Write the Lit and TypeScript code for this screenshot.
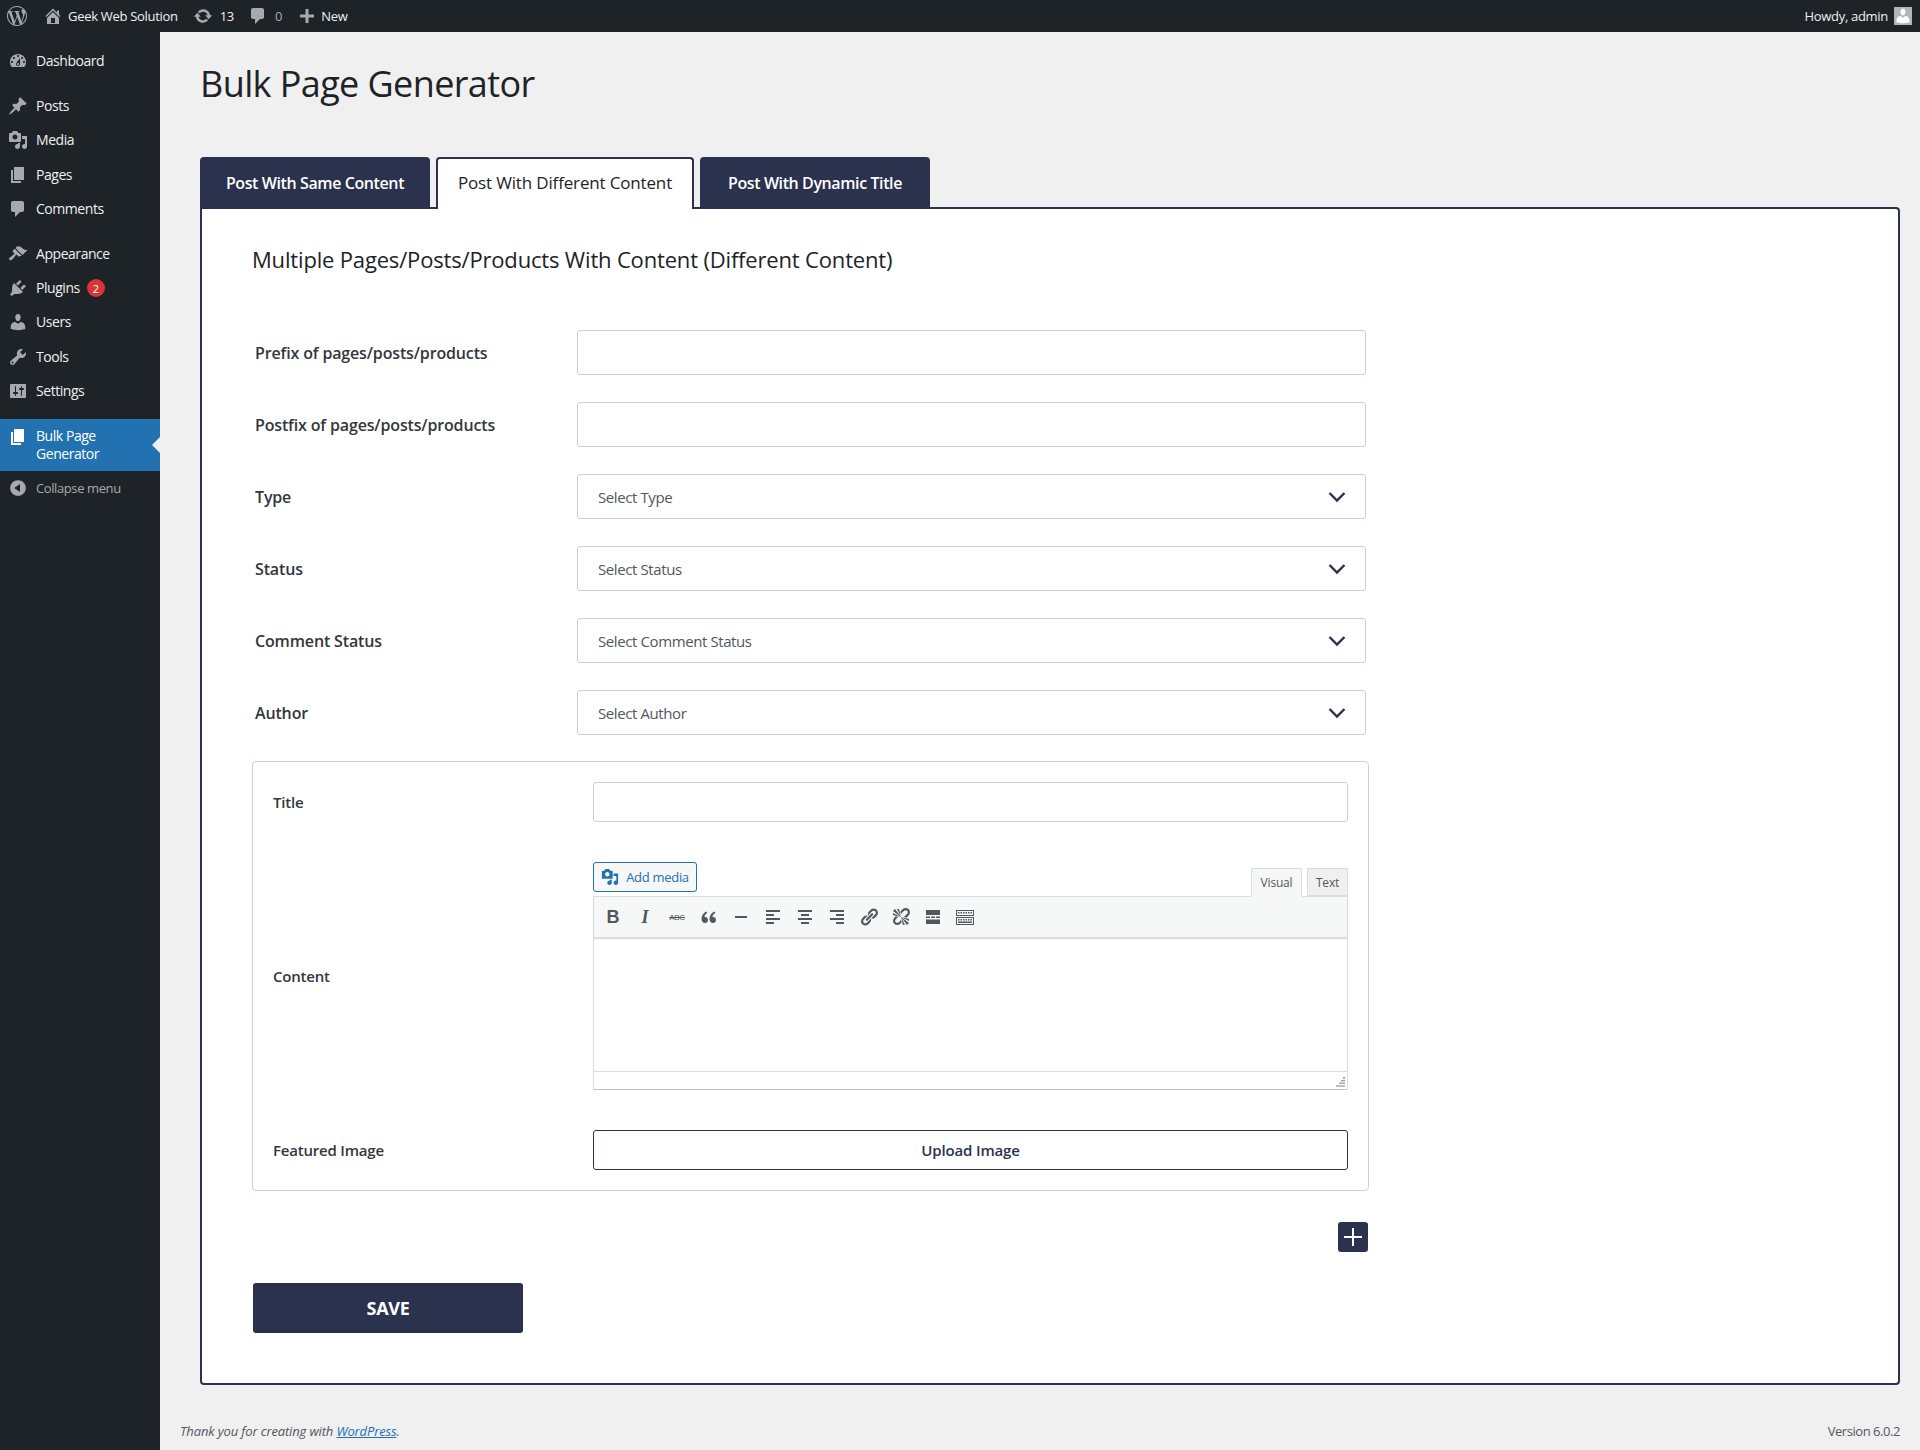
import { LitElement, html, css, svg } from 'lit';
import { customElement } from 'lit/decorators.js';

const ICONS: Record<string, string> = {
  dashboard: 'M3.76 16h12.48c1.1-1.37 1.76-3.11 1.76-5 0-4.42-3.58-8-8-8s-8 3.58-8 8c0 1.89.66 3.63 1.76 5zM10 4c.55 0 1 .45 1 1s-.45 1-1 1-1-.45-1-1 .45-1 1-1zM6 6c.55 0 1 .45 1 1s-.45 1-1 1-1-.45-1-1 .45-1 1-1zm8 0c.55 0 1 .45 1 1s-.45 1-1 1-1-.45-1-1 .45-1 1-1zm-5.37 5.55L12 7v6c0 1.1-.9 2-2 2s-2-.9-2-2c0-.57.24-1.08.63-1.45zM4 10c.55 0 1 .45 1 1s-.45 1-1 1-1-.45-1-1 .45-1 1-1zm12 0c.55 0 1 .45 1 1s-.45 1-1 1-1-.45-1-1 .45-1 1-1zm-5 3c0-.55-.45-1-1-1s-1 .45-1 1 .45 1 1 1 1-.45 1-1z',
  post: 'M10.44 3.02l1.82-1.82 6.36 6.35-1.83 1.82c-1.05-.68-2.48-.57-3.41.36l-.75.75c-.92.93-1.04 2.35-.35 3.41l-1.83 1.82-2.41-2.41-2.8 2.79c-.42.42-3.38 2.71-3.8 2.29s1.86-3.39 2.28-3.81l2.79-2.79L4.1 9.36l1.83-1.82c1.05.69 2.48.57 3.4-.36l.75-.75c.93-.92 1.05-2.35.36-3.41z',
  media: 'M13 11V4c0-.55-.45-1-1-1h-1.67L9 1H5L3.67 3H2c-.55 0-1 .45-1 1v7c0 .55.45 1 1 1h10c.55 0 1-.45 1-1zM7 4.5c1.38 0 2.5 1.12 2.5 2.5S8.38 9.5 7 9.5 4.5 8.38 4.5 7 5.62 4.5 7 4.5zM14 6h5v10.5c0 1.38-1.12 2.5-2.5 2.5S14 17.88 14 16.5s1.12-2.5 2.5-2.5c.17 0 .34.02.5.05V9h-3V6zm-4 8.05V13h2v3.5c0 1.38-1.12 2.5-2.5 2.5S7 17.88 7 16.5 8.12 14 9.5 14c.17 0 .34.02.5.05z',
  page: 'M6 15V2h10v13H6zm-1 1h8v2H3V5h2v11z',
  comments: 'M5 2h9c1.1 0 2 .9 2 2v7c0 1.1-.9 2-2 2h-2l-5 5v-5H5c-1.1 0-2-.9-2-2V4c0-1.1.9-2 2-2z',
  appearance: 'M14.48 11.06L7.41 3.99l1.5-1.5c.5-.56 2.3-.47 3.51.32 1.21.8 1.43 1.28 2.91 2.1 1.18.64 2.45 1.26 4.45.85zm-.71.71L6.7 4.7 4.93 6.47c-.39.39-.39 1.02 0 1.41l1.06 1.06c.39.39.39 1.03 0 1.42-.6.6-1.43 1.11-2.21 1.69-.35.26-.7.53-1.01.84C1.43 13.23.4 14.75 1.4 15.75c.99 1 2.5-.03 3.83-1.37.31-.31.58-.65.84-1 .58-.79 1.1-1.62 1.7-2.22.39-.39 1.02-.39 1.41 0l1.06 1.06c.39.4 1.02.4 1.41 0z',
  plugins: 'M13.11 4.36L9.87 7.6 8 5.73l3.24-3.24c.35-.34 1.05-.2 1.56.32.52.51.66 1.21.31 1.55zm-8 1.77l.91-1.12 9.01 9.01-1.19.84c-.71.71-2.63 1.16-3.82 1.16H6.14L4.9 17.26c-.59.59-1.54.59-2.12 0-.59-.58-.59-1.53 0-2.12l1.24-1.24v-3.88c0-1.13.4-3.19 1.09-3.89zm7.26 3.97l3.24-3.24c.34-.35 1.04-.21 1.55.31.52.51.66 1.21.31 1.55l-3.24 3.25z',
  users: 'M10 9.25c-2.27 0-2.73-3.44-2.73-3.44C7 4.02 7.82 2 9.97 2c2.16 0 2.98 2.02 2.71 3.81 0 0-.41 3.44-2.68 3.44zm0 2.57L12.72 10c2.39 0 4.52 2.33 4.52 4.53v2.49s-3.65 1.13-7.24 1.13c-3.65 0-7.24-1.13-7.24-1.13v-2.49c0-2.25 1.94-4.48 4.47-4.48z',
  tools: 'M16.68 9.77c-1.34 1.34-3.3 1.67-4.95.99l-5.41 6.52c-.99.99-2.59.99-3.58 0s-.99-2.59 0-3.57l6.52-5.42c-.68-1.65-.35-3.61.99-4.95 1.28-1.28 3.12-1.62 4.72-1.06l-2.89 2.89 2.82 2.82 2.86-2.87c.53 1.58.18 3.39-1.08 4.65zM3.81 16.21c.4.39 1.04.39 1.43 0 .4-.4.4-1.04 0-1.43-.39-.4-1.03-.4-1.43 0-.39.39-.39 1.03 0 1.43z',
  settings: 'M18 16V4c0-.55-.45-1-1-1H3c-.55 0-1 .45-1 1v12c0 .55.45 1 1 1h14c.55 0 1-.45 1-1zM8 11h1c.55 0 1 .45 1 1s-.45 1-1 1H8v1.5c0 .28-.22.5-.5.5s-.5-.22-.5-.5V13H6c-.55 0-1-.45-1-1s.45-1 1-1h1V5.5c0-.28.22-.5.5-.5s.5.22.5.5V11zm5-2h-1c-.55 0-1-.45-1-1s.45-1 1-1h1V5.5c0-.28.22-.5.5-.5s.5.22.5.5V7h1c.55 0 1 .45 1 1s-.45 1-1 1h-1v5.5c0 .28-.22.5-.5.5s-.5-.22-.5-.5V9z',
  collapse: 'M10 2.16c4.33 0 7.84 3.51 7.84 7.84s-3.51 7.84-7.84 7.84S2.16 14.33 2.16 10 5.71 2.16 10 2.16zm2 11.72V6.12L6.18 9.97z',
  home: 'M16 8.5l1.53 1.53-1.06 1.06L10 4.62l-6.47 6.47-1.06-1.06L10 2.5l4 4v-2h2v4zm-6-2.46l6 5.99V18H4v-5.97zM12 17v-5H8v5h4z',
  update: 'M10.2 3.28c3.53 0 6.43 2.61 6.92 6h2.08l-3.5 4-3.5-4h2.32c-.45-1.97-2.21-3.45-4.32-3.45-1.45 0-2.73.71-3.54 1.78L4.95 5.66C6.23 4.2 8.11 3.28 10.2 3.28zm-.4 13.44c-3.52 0-6.43-2.61-6.92-6H.8l3.5-4c1.17 1.33 2.33 2.67 3.5 4H5.48c.45 1.97 2.21 3.45 4.32 3.45 1.45 0 2.73-.71 3.54-1.78l1.71 1.95c-1.28 1.46-3.15 2.38-5.25 2.38z',
  plus: 'M17 8.5v3h-5.5V17h-3v-5.5H3v-3h5.5V3h3v5.5z',
  quote: 'M9 13c0 1.700-1.300 3-3 3-2.200 0-3.500-1.700-3.500-4.200C2.500 8.800 4.300 6 7.500 4.500l.800 1.500C6.500 7 5.600 8.300 5.500 10.100c.200-.100.500-.100.700-.100C7.800 10 9 11.300 9 13zM17 13c0 1.700-1.300 3-3 3-2.200 0-3.500-1.700-3.500-4.200 0-3 1.800-5.800 5-7.300l.800 1.500c-1.800 1-2.700 2.300-2.800 4.100.200-.100.500-.100.700-.100 1.600 0 2.800 1.300 2.800 3z',
  hr: 'M4 9h12v2H4z',
  alignleft: 'M3 3h14v2H3zm0 4h8v2H3zm0 4h14v2H3zm0 4h8v2H3z',
  aligncenter: 'M3 3h14v2H3zm3 4h8v2H6zm-3 4h14v2H3zm3 4h8v2H6z',
  alignright: 'M3 3h14v2H3zm6 4h8v2H9zm-6 4h14v2H3zm6 4h8v2H9z',
  link: 'M17.74 2.76c1.68 1.69 1.68 4.41 0 6.1l-1.53 1.52c-1.12 1.12-2.7 1.47-4.14 1.09l2.62-2.61.76-.77.76-.76c.84-.84.84-2.2 0-3.04-.84-.85-2.2-.85-3.04 0l-.77.76-3.38 3.38c-.37-1.44-.02-3.02 1.1-4.14l1.52-1.53c1.69-1.68 4.42-1.68 6.1 0zM8.59 13.43l5.34-5.34c.42-.42.42-1.1 0-1.52-.44-.43-1.13-.39-1.53 0l-5.33 5.34c-.42.42-.42 1.1 0 1.52.44.43 1.13.39 1.52 0zm-.76 2.29l4.14-4.15c.38 1.44.03 3.02-1.09 4.14l-1.52 1.53c-1.69 1.68-4.41 1.68-6.1 0-1.68-1.68-1.68-4.42 0-6.1l1.53-1.52c1.12-1.12 2.7-1.47 4.14-1.1l-4.14 4.15c-.85.84-.85 2.2 0 3.05.84.84 2.2.84 3.04 0z',
  unlink: 'M17.74 2.26c1.68 1.69 1.68 4.41 0 6.1l-1.53 1.52c-.32.33-.69.58-1.08.77L13 10l1.69-1.64.76-.77.76-.76c.84-.84.84-2.2 0-3.04-.84-.85-2.2-.85-3.04 0l-.77.76-.76.76L10 7l-.65-2.14c.19-.38.44-.75.77-1.07l1.52-1.53c1.69-1.68 4.42-1.68 6.1 0zM2 4l8 6-6-8zm4-2l4 8-2-8H6zM2 6l8 4-8-2V6zm7.360 7.690L10 13l.74 2.350-1.380 1.390c-1.690 1.680-4.410 1.680-6.100 0-1.680-1.680-1.680-4.420 0-6.100l1.390-1.380L7 10l-.690.640-1.520 1.530c-.850.840-.850 2.200 0 3.040.840.850 2.200.850 3.040 0zM18 16l-8-6 6 8zm-4 2l-4-8 2 8h2zm4-4l-8-4 8 2v2z',
  more: 'M3 3h14v5H3zm0 6.500h4v1.500H3zm5 0h4v1.500H8zm5 0h4v1.500h-4zM3 12.500h14V17H3z',
  kitchen: 'M1 3h18v6H1zm1 1v4h16V4zm1 1h1.500v1.500H3zm2.500 0H7v1.500H5.500zM8 5h1.500v1.500H8zm2.500 0H12v1.500h-1.500zM13 5h1.500v1.500H13zm2.500 0H17v1.500h-1.500zM1 10h18v8H1zm1 1v6h16v-6zm1 1h1.500v1.500H3zm2.500 0H7v1.500H5.500zM8 12h1.500v1.500H8zm2.500 0H12v1.500h-1.500zM13 12h1.500v1.500H13zm2.500 0H17v1.500h-1.500zM3 14.500h14V16H3z',
};

const WP_LOGO = 'M21.469 6.825c.84 1.537 1.318 3.3 1.318 5.175 0 3.979-2.156 7.456-5.363 9.325l3.295-9.527c.615-1.54.82-2.771.82-3.864 0-.405-.026-.78-.07-1.11m-7.981.105c.647-.03 1.232-.105 1.232-.105.582-.075.514-.93-.067-.899 0 0-1.755.135-2.88.135-1.064 0-2.85-.15-2.85-.15-.585-.03-.661.855-.075.885 0 0 .54.061 1.125.09l1.68 4.605-2.37 7.08L5.354 6.9c.649-.03 1.234-.1 1.234-.1.585-.075.516-.93-.065-.896 0 0-1.746.138-2.874.138-.2 0-.438-.008-.69-.015C4.911 3.15 8.235 1.215 12 1.215c2.809 0 5.365 1.072 7.286 2.833-.046-.003-.091-.009-.141-.009-1.06 0-1.812.923-1.812 1.914 0 .89.513 1.643 1.06 2.531.411.72.89 1.643.89 2.977 0 .915-.354 1.994-.821 3.479l-1.075 3.585-3.9-11.61.001.014zM12 22.784c-1.059 0-2.081-.153-3.048-.437l3.237-9.406 3.315 9.087c.024.053.05.101.078.149-1.12.393-2.325.609-3.582.609M1.211 12c0-1.564.336-3.05.935-4.39L7.29 21.709C3.694 19.96 1.212 16.271 1.211 12M12 0C5.385 0 0 5.385 0 12s5.385 12 12 12 12-5.385 12-12S18.615 0 12 0';

const icon = (name: string, size = 20) => html`<svg class="ico" width=${size} height=${size} viewBox="0 0 20 20" fill="currentColor">${svg`<path fill-rule="evenodd" d=${ICONS[name]}></path>`}</svg>`;

const MENU = [
  [{ label: 'Dashboard', icon: 'dashboard' }],
  [
    { label: 'Posts', icon: 'post' },
    { label: 'Media', icon: 'media' },
    { label: 'Pages', icon: 'page' },
    { label: 'Comments', icon: 'comments' },
  ],
  [
    { label: 'Appearance', icon: 'appearance' },
    { label: 'Plugins', icon: 'plugins', badge: '2' },
    { label: 'Users', icon: 'users' },
    { label: 'Tools', icon: 'tools' },
    { label: 'Settings', icon: 'settings' },
  ],
];

const FIELDS = [
  { label: 'Prefix of pages/posts/products' },
  { label: 'Postfix of pages/posts/products' },
  { label: 'Type', placeholder: 'Select Type' },
  { label: 'Status', placeholder: 'Select Status' },
  { label: 'Comment Status', placeholder: 'Select Comment Status' },
  { label: 'Author', placeholder: 'Select Author' },
];

const TOOLBAR = ['quote', 'hr', 'alignleft', 'aligncenter', 'alignright', 'link', 'unlink', 'more', 'kitchen'];

@customElement('app-root')
export class AppRoot extends LitElement {
  static styles = css`
    :host {
      display: block;
      min-height: 1450px;
      background: #f0f0f1;
      font-family: "Open Sans", "Noto Sans", sans-serif;
      color: #1d2327;
      --navy: #2b324e;
      --line: #c8cde0;
    }
    * { box-sizing: border-box; }
    .ico { display: block; flex: none; }

    /* admin bar */
    .adminbar {
      height: 32px;
      background: #1d2327;
      color: #f0f0f1;
      display: flex;
      align-items: center;
      font-size: 13px;
      letter-spacing: -0.3px;
      padding: 0 8px 0 7px;
    }
    .adminbar .grey { color: #a7aaad; }
    .ab-item { display: flex; align-items: center; }
    .ab-logo { margin-right: 16px; color: #a7aaad; }
    .ab-home { gap: 5px; margin-right: 15px; }
    .ab-home .ico { color: #a7aaad; }
    .ab-update { gap: 7px; margin-right: 14px; }
    .ab-update .ico { color: #a7aaad; }
    .ab-comment { gap: 7px; margin-right: 15px; }
    .ab-comment .ico { color: #a7aaad; }
    .ab-new { gap: 4px; }
    .ab-new .ico { color: #a7aaad; }
    .ab-user { margin-left: auto; gap: 6px; }
    .avatar {
      width: 18px;
      height: 18px;
      background: #b4b4b4;
      color: #fff;
      overflow: hidden;
    }

    .layout { display: flex; min-height: 1418px; }

    /* sidebar */
    .sidebar {
      width: 160px;
      flex: none;
      background: #1d2327;
      padding-top: 12px;
      font-size: 14px;
      letter-spacing: -0.45px;
      color: #f0f0f1;
    }
    .menu-group { margin-bottom: 11px; }
    .menu-item {
      height: 34.2px;
      display: flex;
      align-items: center;
      padding-left: 8px;
      gap: 8px;
    }
    .menu-item span:not(.badge) { padding-bottom: 1px; }
    .menu-item .ico { color: #a7aaad; }
    .badge {
      width: 18px;
      height: 18px;
      border-radius: 50%;
      background: #d63638;
      color: #fff;
      font-size: 11px;
      letter-spacing: 0;
      display: flex;
      align-items: center;
      justify-content: center;
      margin-left: -1px;
    }
    .menu-current {
      position: relative;
      height: 52px;
      background: #2271b1;
      color: #fff;
      display: flex;
      padding: 8px 0 0 8px;
      gap: 8px;
      line-height: 18px;
    }
    .menu-current::after {
      content: '';
      position: absolute;
      right: 0;
      top: 18px;
      border: 8px solid transparent;
      border-right-color: #f0f0f1;
    }
    .collapse {
      height: 34px;
      display: flex;
      align-items: center;
      padding-left: 8px;
      gap: 8px;
      font-size: 13px;
      letter-spacing: -0.4px;
      color: #a7aaad;
    }

    /* main */
    .main { flex: 1; padding: 0 20px 0 40px; min-width: 0; }
    h1 {
      margin: 0;
      padding-top: 29px;
      height: 125px;
      font-size: 36px;
      line-height: 46px;
      font-weight: 400;
      letter-spacing: -0.6px;
    }
    .tabs { display: flex; gap: 6px; margin-bottom: -2px; position: relative; }
    .tab {
      height: 52px;
      background: var(--navy);
      color: #fff;
      border: 2px solid var(--navy);
      border-bottom: none;
      border-radius: 4px 4px 0 0;
      font-size: 16px;
      font-weight: 600;
      letter-spacing: -0.4px;
      display: flex;
      align-items: center;
      justify-content: center;
      width: 230px;
      padding-bottom: 2px;
    }
    .tab.active {
      width: 258px;
      background: #fff;
      color: #1d2327;
      font-size: 17px;
      font-weight: 400;
      letter-spacing: -0.16px;
      padding-bottom: 4px;
    }
    .panel {
      background: #fff;
      border: 2px solid var(--navy);
      border-radius: 0 4px 4px 4px;
      height: 1178px;
      padding: 35px 50px 0;
    }
    h2 {
      margin: 0 0 56px;
      font-size: 22px;
      line-height: 30px;
      font-weight: 400;
      letter-spacing: -0.17px;
    }
    .rows { width: 1114px; display: flex; flex-direction: column; gap: 27px; }
    .row { display: grid; grid-template-columns: 325px 1fr; align-items: center; }
    .label {
      font-size: 16px;
      font-weight: 600;
      color: #32373c;
      letter-spacing: -0.15px;
      padding-left: 3px;
    }
    .control {
      height: 45px;
      background: #fff;
      border: 1px solid var(--line);
      border-radius: 3px;
      padding: 0 19px 0 20px;
      display: flex;
      align-items: center;
      justify-content: space-between;
      font-size: 15px;
      letter-spacing: -0.4px;
      color: #50575e;
    }
    .control svg { color: var(--navy); }

    .repeater {
      width: 1117px;
      margin-top: 26px;
      border: 1px solid var(--line);
      border-radius: 4px;
      padding: 20px;
      display: flex;
      flex-direction: column;
      gap: 40px;
    }
    .rep-row { display: grid; grid-template-columns: 320px 1fr; align-items: center; }
    .rep-row .label { padding-left: 0; font-size: 15px; letter-spacing: -0.2px; }
    .rep-row .control { height: 40px; }

    .editor-tools { display: flex; justify-content: space-between; height: 34px; }
    .add-media {
      height: 30px;
      width: 104px;
      border: 1px solid #2271b1;
      border-radius: 3px;
      color: #2271b1;
      font-size: 13px;
      letter-spacing: -0.3px;
      display: flex;
      align-items: center;
      justify-content: center;
      gap: 7px;
      background: #f6f7f7;
    }
    .mode-tabs { display: flex; gap: 5px; align-items: flex-end; font-size: 12px; letter-spacing: -0.2px; color: #50575e; }
    .mode {
      height: 28px;
      padding: 0 8px;
      width: 41px;
      display: flex;
      align-items: center;
      justify-content: center;
      border: 1px solid #dcdcde;
      background: #f0f0f1;
    }
    .mode.on {
      width: 51px;
      background: #f6f7f7;
      border-bottom-color: #f6f7f7;
      margin-bottom: -1px;
      height: 29px;
      position: relative;
    }
    .editor { border: 1px solid #dcdcde; border-bottom: 1px solid #c3c4c7; background: #fff; }
    .toolbar {
      height: 41px;
      background: #f6f7f7;
      border-bottom: 1px solid #dcdcde;
      box-shadow: 0 1px 1px rgba(0, 0, 0, 0.12);
      display: flex;
      align-items: center;
      padding-left: 3px;
      color: #50575e;
    }
    .tb {
      width: 32px;
      display: flex;
      justify-content: center;
      align-items: center;
    }
    .tb-b { font: 700 18px "Liberation Sans", sans-serif; }
    .tb-i { font: italic 700 18px "Liberation Serif", serif; }
    .tb-s { font: 400 8px "Liberation Sans", sans-serif; text-decoration: line-through; letter-spacing: -0.3px; }
    .editarea { height: 134px; border-bottom: 1px solid #dcdcde; }
    .statusbar { height: 17px; display: flex; justify-content: flex-end; align-items: flex-end; padding: 0 2px 2px 0; color: #a7aaad; }

    .upload {
      height: 40px;
      border: 1px solid var(--navy);
      border-radius: 3px;
      display: flex;
      align-items: center;
      justify-content: center;
      font-size: 15px;
      font-weight: 600;
      letter-spacing: -0.15px;
      color: var(--navy);
    }
    .add-row { width: 1116px; display: flex; justify-content: flex-end; margin-top: 31px; }
    .plus {
      width: 30px;
      height: 30px;
      background: var(--navy);
      color: #fff;
      border-radius: 3px;
      display: flex;
      align-items: center;
      justify-content: center;
    }
    .save {
      margin: 31px 0 0 1px;
      width: 270px;
      height: 50px;
      background: var(--navy);
      color: #fff;
      border-radius: 3px;
      display: flex;
      align-items: center;
      justify-content: center;
      font-size: 18px;
      font-weight: 700;
      letter-spacing: -0.3px;
    }
    .footer {
      display: flex;
      justify-content: space-between;
      padding-top: 36px;
      margin-left: -20px;
      font-size: 13px;
      line-height: 20px;
      letter-spacing: -0.14px;
      color: #50575e;
    }
    .footer em { font-style: italic; }
    .footer a { color: #2271b1; text-decoration: underline; }
    .footer span { letter-spacing: -0.45px; }
  `;

  renderItem(m: { label: string; icon: string; badge?: string }) {
    return html`<div class="menu-item">
      ${icon(m.icon)}<span>${m.label}</span>
      ${m.badge ? html`<span class="badge">${m.badge}</span>` : ''}
    </div>`;
  }

  render() {
    return html`
      <div class="adminbar">
        <div class="ab-item ab-logo">
          <svg class="ico" width="20" height="20" viewBox="0 0 24 24" fill="currentColor"><path d=${WP_LOGO}></path></svg>
        </div>
        <div class="ab-item ab-home">${icon('home')}<span>Geek Web Solution</span></div>
        <div class="ab-item ab-update">${icon('update')}<span>13</span></div>
        <div class="ab-item ab-comment">${icon('comments')}<span class="grey">0</span></div>
        <div class="ab-item ab-new">${icon('plus')}<span>New</span></div>
        <div class="ab-item ab-user">
          <span>Howdy, admin</span>
          <div class="avatar">${icon('users', 18)}</div>
        </div>
      </div>

      <div class="layout">
        <nav class="sidebar">
          ${MENU.map(group => html`<div class="menu-group">${group.map(m => this.renderItem(m))}</div>`)}
          <div class="menu-current">${icon('page')}<span>Bulk Page<br />Generator</span></div>
          <div class="collapse">${icon('collapse')}<span>Collapse menu</span></div>
        </nav>

        <main class="main">
          <h1>Bulk Page Generator</h1>
          <div class="tabs">
            <div class="tab">Post With Same Content</div>
            <div class="tab active">Post With Different Content</div>
            <div class="tab">Post With Dynamic Title</div>
          </div>
          <section class="panel">
            <h2>Multiple Pages/Posts/Products With Content (Different Content)</h2>
            <div class="rows">
              ${FIELDS.map(f => html`
                <div class="row">
                  <div class="label">${f.label}</div>
                  <div class="control">
                    ${f.placeholder ? html`<span>${f.placeholder}</span>
                      <svg width="18" height="12" viewBox="0 0 18 12" fill="none" stroke="currentColor" stroke-width="2.4"><path d="M1.500 2l7.500 7.500L16.500 2"></path></svg>` : ''}
                  </div>
                </div>
              `)}
            </div>

            <div class="repeater">
              <div class="rep-row">
                <div class="label">Title</div>
                <div class="control"></div>
              </div>
              <div class="rep-row">
                <div class="label">Content</div>
                <div>
                  <div class="editor-tools">
                    <div class="add-media">${icon('media', 18)}<span>Add media</span></div>
                    <div class="mode-tabs">
                      <div class="mode on">Visual</div>
                      <div class="mode">Text</div>
                    </div>
                  </div>
                  <div class="editor">
                    <div class="toolbar">
                      <div class="tb tb-b">B</div>
                      <div class="tb tb-i">I</div>
                      <div class="tb tb-s">ABC</div>
                      ${TOOLBAR.map(name => html`<div class="tb">${icon(name)}</div>`)}
                    </div>
                    <div class="editarea"></div>
                    <div class="statusbar">
                      <svg width="10" height="10" viewBox="0 0 10 10" fill="currentColor"><path d="M8 0h2v2H8zM6 3h4v1.500H6zM4 5.500h6V7H4zM1 8.200h9v1.500H1z"></path></svg>
                    </div>
                  </div>
                </div>
              </div>
              <div class="rep-row">
                <div class="label">Featured Image</div>
                <div class="upload">Upload Image</div>
              </div>
            </div>

            <div class="add-row">
              <div class="plus">
                <svg width="18" height="18" viewBox="0 0 18 18" fill="currentColor"><path d="M8 0h2v8h8v2h-8v8H8v-8H0V8h8z"></path></svg>
              </div>
            </div>
            <div class="save">SAVE</div>
          </section>
          <footer class="footer">
            <em>Thank you for creating with <a>WordPress</a>.</em>
            <span>Version 6.0.2</span>
          </footer>
        </main>
      </div>
    `;
  }
}
